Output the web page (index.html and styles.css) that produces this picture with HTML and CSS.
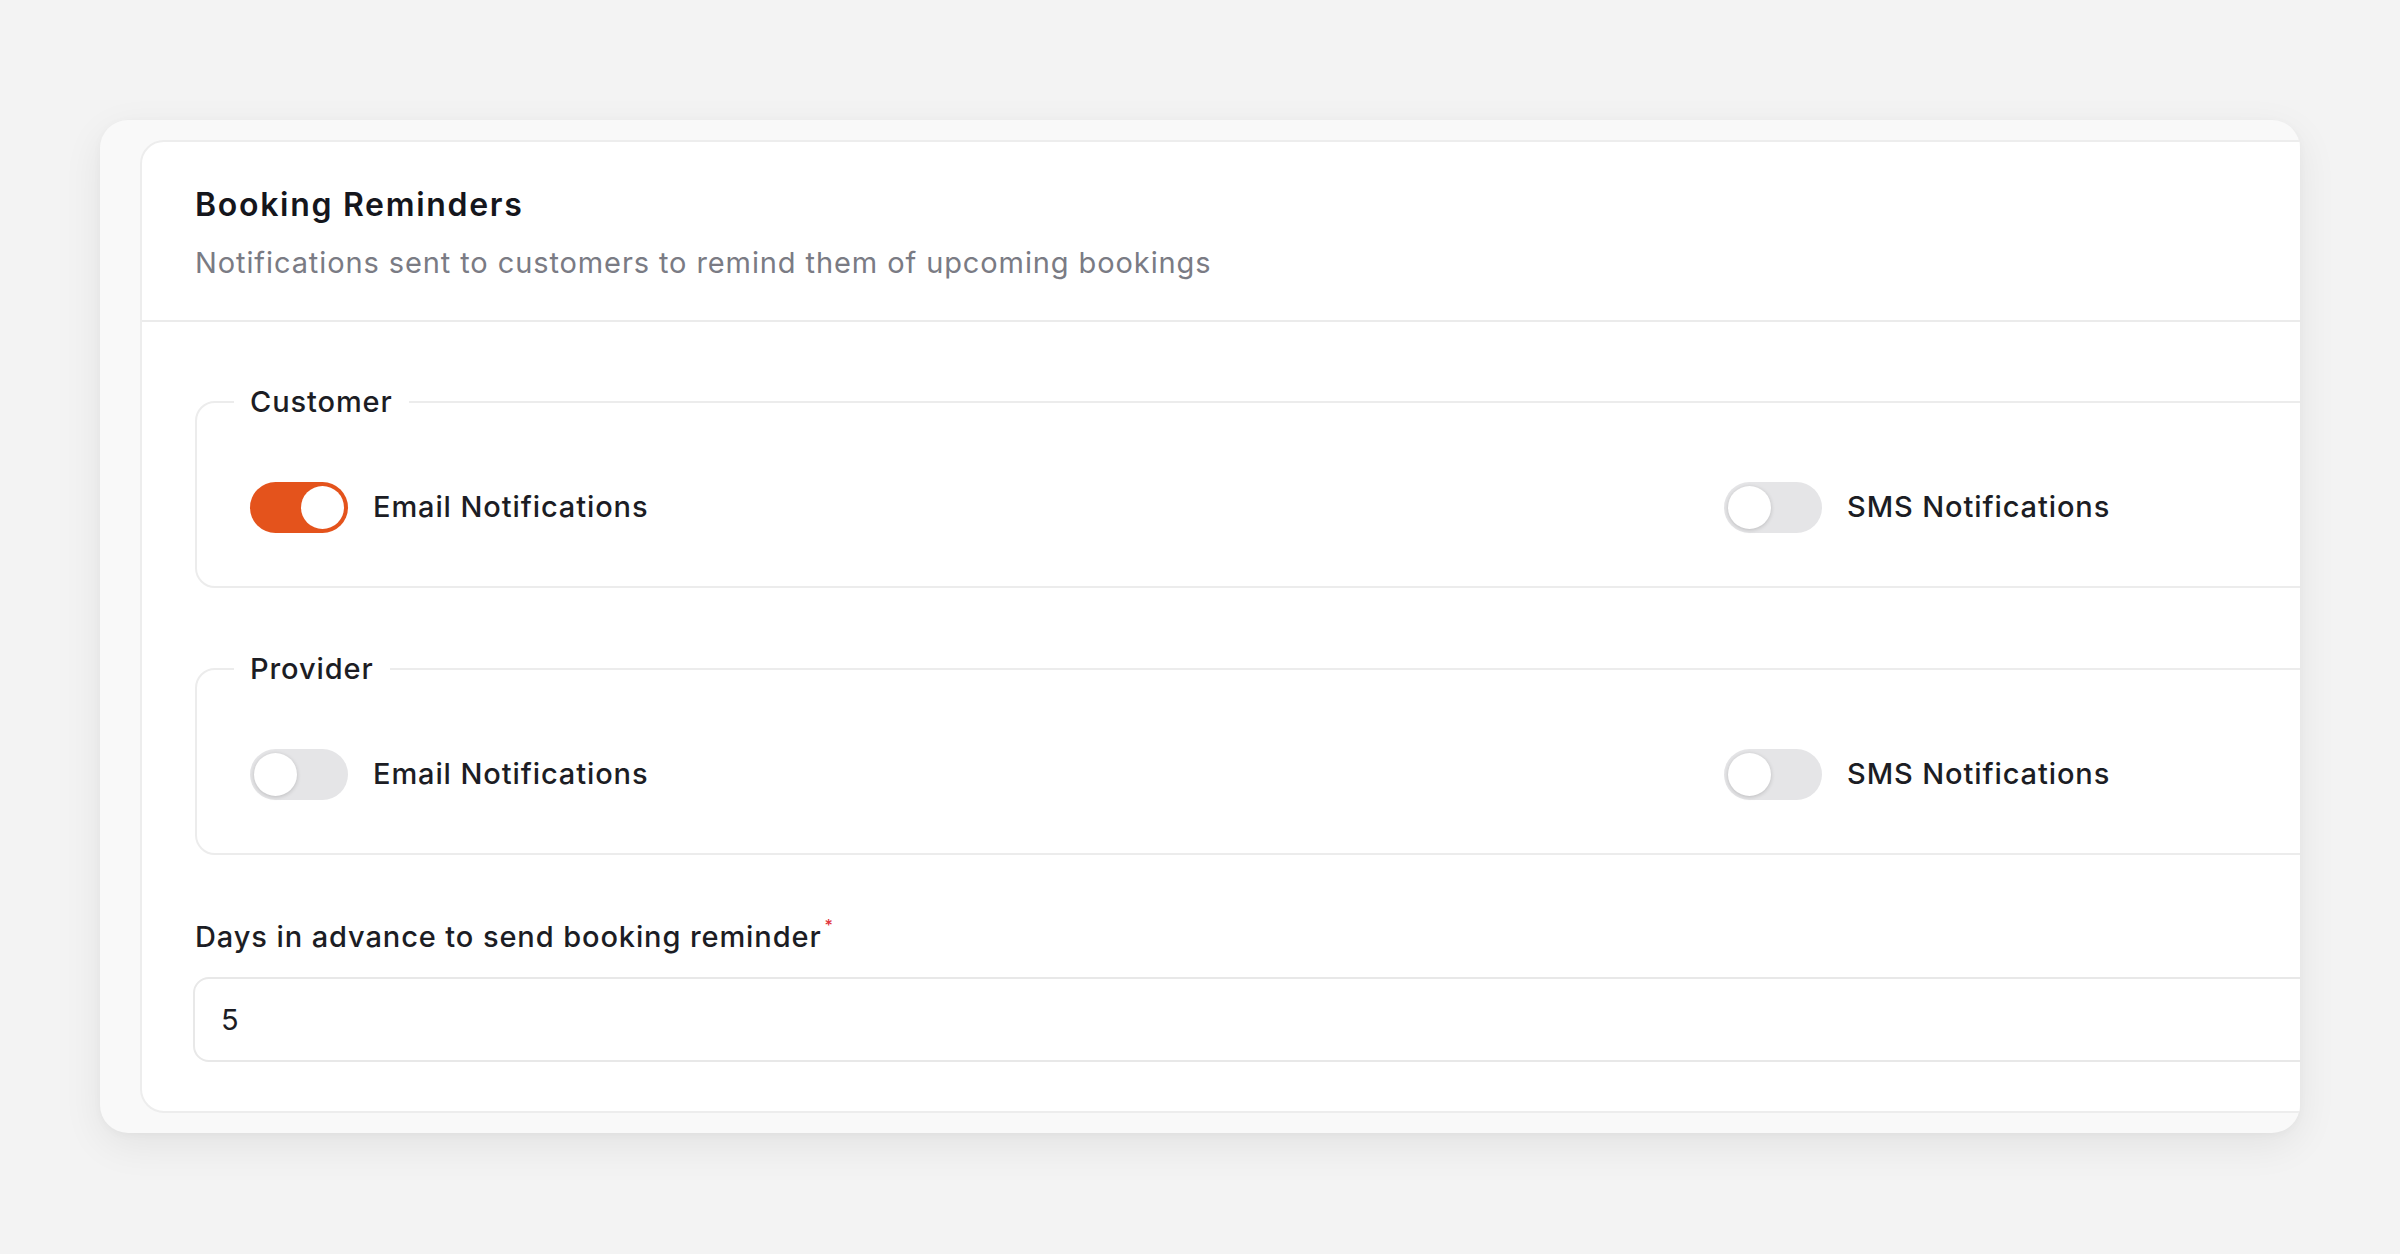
FILE: index.html
```html
<!DOCTYPE html>
<html lang="en">
<head>
<meta charset="utf-8">
<title>Booking Reminders</title>
<link rel="stylesheet" href="styles.css">
</head>
<body>
  <div class="frame">
    <section class="card">
      <header class="card-header">
        <h2 class="card-title">Booking Reminders</h2>
        <p class="card-subtitle">Notifications sent to customers to remind them of upcoming bookings</p>
      </header>
      <div class="card-body">
        <fieldset class="group">
          <legend class="group-legend">Customer</legend>
          <div class="options">
            <label class="option">
              <span class="switch is-on"><span class="knob"></span></span>
              <span class="option-label">Email Notifications</span>
            </label>
            <label class="option">
              <span class="switch"><span class="knob"></span></span>
              <span class="option-label">SMS Notifications</span>
            </label>
          </div>
        </fieldset>
        <fieldset class="group">
          <legend class="group-legend">Provider</legend>
          <div class="options">
            <label class="option">
              <span class="switch"><span class="knob"></span></span>
              <span class="option-label">Email Notifications</span>
            </label>
            <label class="option">
              <span class="switch"><span class="knob"></span></span>
              <span class="option-label">SMS Notifications</span>
            </label>
          </div>
        </fieldset>
        <div class="field">
          <label class="field-label" for="days">Days in advance to send booking reminder<span class="req">*</span></label>
          <input class="field-input" id="days" type="text" value="5">
        </div>
      </div>
    </section>
  </div>
</body>
</html>
```
FILE: styles.css
```css
* { box-sizing: border-box; }

html, body {
  margin: 0;
  padding: 0;
}

body {
  background: #f3f3f3;
  font-family: Inter, "Noto Sans", "Liberation Sans", sans-serif;
  color: #1c1d24;
  padding: 120px 0 0 100px;
  min-height: 1254px;
}

.frame {
  width: 2200px;
  background: #f9f9f9;
  border-radius: 28px;
  overflow: hidden;
  padding: 20px 0 20px 40px;
  box-shadow: 0 12px 40px rgba(0, 0, 0, 0.07), 0 2px 8px rgba(0, 0, 0, 0.03);
}

.card {
  width: 3176px;
  background: #ffffff;
  border: 2px solid #ededed;
  border-radius: 24px;
}

.card-header {
  padding: 42px 53px 37px;
  border-bottom: 2px solid #ebebeb;
}

.card-title {
  margin: 0;
  font-size: 32px;
  line-height: 1.3;
  font-weight: 600;
  letter-spacing: 1.7px;
  color: #15161c;
}

.card-subtitle {
  margin: 17px 0 0;
  font-size: 29px;
  line-height: 1.4;
  font-weight: 400;
  letter-spacing: 0.9px;
  color: #7a7b84;
}

.card-body {
  padding: 61px 0 49px 53px;
}

.group {
  margin: 0 0 62px;
  border: 2px solid #ececec;
  border-radius: 20px;
  padding: 61px 53px 53px;
  min-width: 0;
}

.group-legend {
  margin-left: -16px;
  padding: 0 16px;
  font-size: 29px;
  line-height: 38px;
  font-weight: 500;
  letter-spacing: 0.9px;
  color: #1c1d24;
}

.options {
  display: grid;
  grid-template-columns: 1474px 1fr;
  align-items: center;
}

.option {
  display: flex;
  align-items: center;
  gap: 25px;
}

.option-label {
  font-size: 29px;
  line-height: 1.4;
  font-weight: 500;
  letter-spacing: 0.9px;
  color: #1c1d24;
}

.switch {
  position: relative;
  flex: 0 0 auto;
  width: 98px;
  height: 51px;
  border-radius: 26px;
  background: #e5e5e7;
}

.switch.is-on {
  background: #e4531c;
}

.knob {
  position: absolute;
  top: 4px;
  left: 4px;
  width: 43px;
  height: 43px;
  border-radius: 50%;
  background: #ffffff;
  box-shadow: 0 1px 4px rgba(0, 0, 0, 0.18);
}

.switch.is-on .knob {
  left: 51px;
  box-shadow: none;
}

.field {
  display: flex;
  flex-direction: column;
  gap: 19px;
}

.field-label {
  font-size: 29px;
  line-height: 1.4;
  font-weight: 500;
  letter-spacing: 0.9px;
  color: #1c1d24;
}

.req {
  color: #e0323a;
  font-size: 16px;
  vertical-align: top;
  margin-left: 3px;
  line-height: 1;
}

.field-input {
  width: 3100px;
  height: 85px;
  margin-left: -2px;
  border: 2px solid #e8e8e8;
  border-radius: 16px;
  padding: 0 26px;
  font-family: inherit;
  font-size: 29px;
  font-weight: 400;
  color: #1c1d24;
  background: #ffffff;
  outline: none;
}
```
